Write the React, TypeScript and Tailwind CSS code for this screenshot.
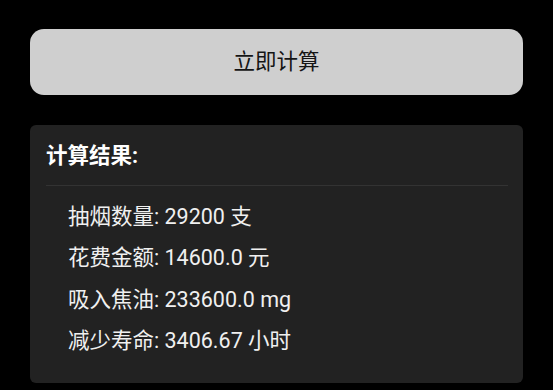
export default function App() {
    const rows = [
        '抽烟数量: 29200 支',
        '花费金额: 14600.0 元',
        '吸入焦油: 233600.0 mg',
        '减少寿命: 3406.67 小时',
    ]
    return (
        <div
            className="w-[553px] h-[390px] bg-black px-[30px] pt-[29px] overflow-hidden"
            style={{ fontFamily: 'Roboto, "Noto Sans CJK SC", sans-serif' }}
        >
            <button className="w-full h-[66px] rounded-[14px] bg-[#cfcfcf] text-[#151515] text-[21.5px] flex items-center justify-center">
                立即计算
            </button>

            <div className="mt-[30px] rounded-md bg-[#222222] pl-4 pr-[15px] pt-[17px] pb-[21px]">
                <div className="text-[21.5px] leading-[28px] font-bold text-white">计算结果:</div>
                <div className="mt-[15px] border-t border-[#333333]" />
                <div className="pt-[10px] pl-[22px]">
                    {rows.map((r) => (
                        <div key={r} className="h-[41.5px] flex items-center text-[21.5px] text-[#f0f0f0]">
                            {r}
                        </div>
                    ))}
                </div>
            </div>
        </div>
    )
}
